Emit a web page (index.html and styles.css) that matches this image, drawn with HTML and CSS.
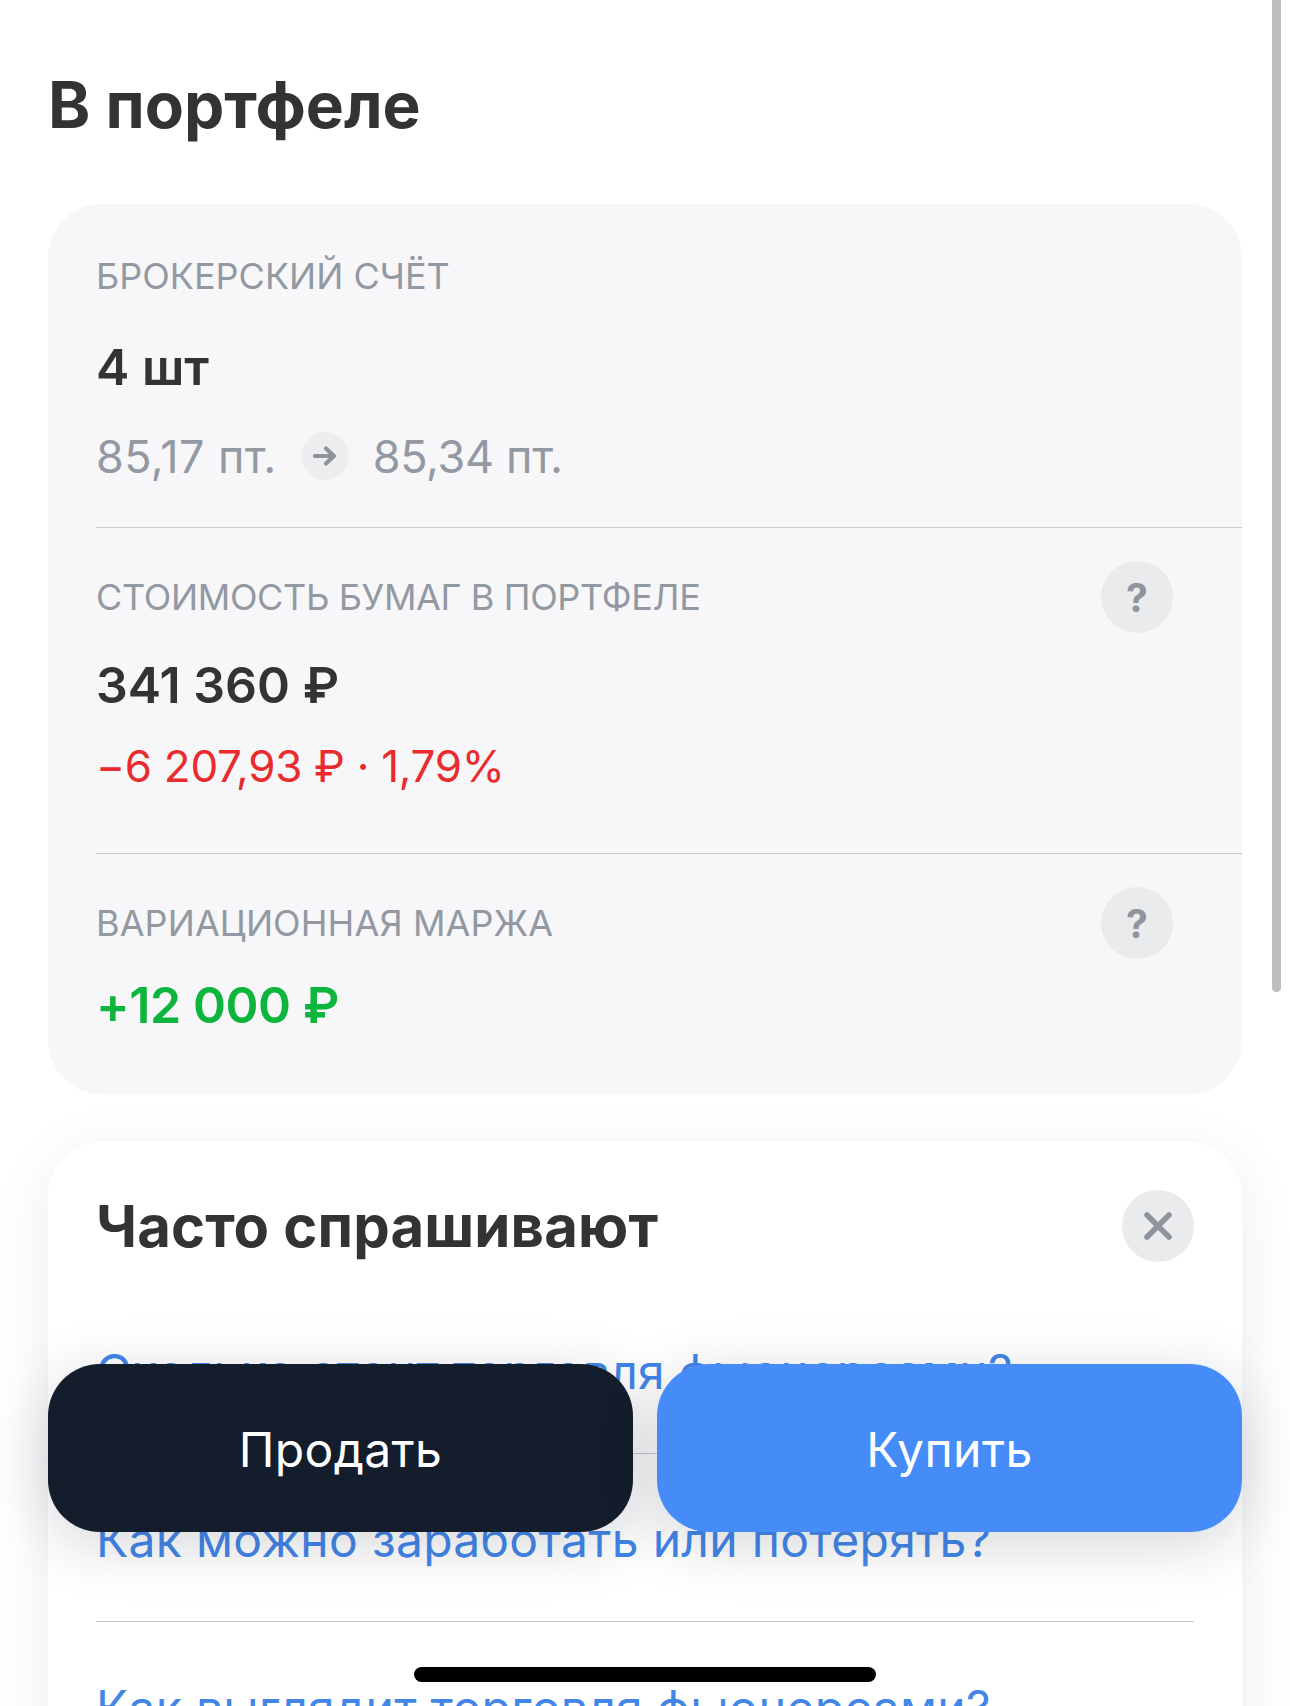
FILE: index.html
```html
<!DOCTYPE html>
<html lang="ru">
<head>
<meta charset="utf-8">
<title>В портфеле</title>
<link rel="stylesheet" href="styles.css">
</head>
<body>
<main class="page">
  <h1 class="title">В портфеле</h1>
  <section class="card">
    <div class="block block-first">
      <div class="label">БРОКЕРСКИЙ СЧЁТ</div>
      <div class="qty">4 шт</div>
      <div class="prices">
        <span class="price-from">85,17 пт.</span>
        <span class="arrow"><svg width="24" height="24" viewBox="0 0 24 24"><path d="M2 12H21M13 4.500L21 12L13 19.500" fill="none" stroke="#8f949c" stroke-width="4.200" stroke-linecap="round" stroke-linejoin="round"/></svg></span>
        <span class="price-to">85,34 пт.</span>
      </div>
    </div>
    <div class="block block-mid">
      <div class="label-row"><div class="label">СТОИМОСТЬ БУМАГ В ПОРТФЕЛЕ</div><span class="round">?</span></div>
      <div class="value">341 360 ₽</div>
      <div class="delta">−6 207,93 ₽ · 1,79%</div>
    </div>
    <div class="block block-last">
      <div class="label-row"><div class="label">ВАРИАЦИОННАЯ МАРЖА</div><span class="round">?</span></div>
      <div class="value green">+12 000 ₽</div>
    </div>
  </section>
  <section class="faq">
    <div class="faq-head">
      <h2 class="faq-title">Часто спрашивают</h2>
      <span class="round close"><svg width="28" height="28" viewBox="0 0 28 28"><path d="M3 3L25 25M25 3L3 25" fill="none" stroke="#8f949c" stroke-width="5.500" stroke-linecap="round"/></svg></span>
    </div>
    <a class="q">Сколько стоит торговля фьючерсами?</a>
    <a class="q">Как можно заработать или потерять?</a>
    <a class="q">Как выглядит торговля фьючерсами?</a>
  </section>
</main>
<div class="actions">
  <button class="btn btn-dark">Продать</button>
  <button class="btn btn-blue">Купить</button>
</div>
<div class="scrollbar"></div>
<div class="home"></div>
</body>
</html>
```
FILE: styles.css
```css
* { box-sizing: border-box; }
html, body { margin: 0; height: 1706px; overflow: hidden; background: #fff; }
body { position: relative; font-family: "Inter", "Liberation Sans", sans-serif; color: #333; }
.page { padding: 63px 48px 0; }
.title { margin: 0 0 57px; font-size: 64px; line-height: 84px; font-weight: 700; color: #333; }
.card { background: #f7f7f9; border-radius: 54px; height: 890px; padding-left: 48px; }
.block { border-bottom: 1px solid #c8cacd; }
.block-first { height: 324px; padding-top: 48px; }
.block-mid { height: 326px; padding-top: 33px; }
.block-last { border-bottom: 0; padding-top: 33px; }
.label { font-size: 36px; line-height: 48px; color: #9299a2; }
.block-first .label { margin-bottom: 37px; }
.block-mid .label { letter-spacing: -.35px; }
.block-last .label { letter-spacing: .1px; }
.label-row { display: flex; justify-content: space-between; align-items: center; padding-right: 69px; height: 72px; }
.qty { font-size: 50px; line-height: 60px; font-weight: 600; color: #333; }
.prices { display: flex; align-items: center; gap: 24px; margin-top: 35px; height: 48px; font-size: 45px; color: #9299a2; }
.price-from { letter-spacing: .4px; }
.price-to { letter-spacing: -.3px; }
.arrow { width: 48px; height: 48px; border-radius: 50%; background: #eceef0; display: flex; align-items: center; justify-content: center; }
.round { width: 72px; height: 72px; border-radius: 50%; background: #eaebed; color: #90949c; font-size: 39px; font-weight: 700; display: flex; align-items: center; justify-content: center; }
.value { font-size: 50px; line-height: 60px; font-weight: 600; color: #333; margin-top: 22px; }
.block-last .value { margin-top: 16px; letter-spacing: -.4px; }
.green { color: #0eb53c; }
.delta { font-size: 44px; line-height: 60px; letter-spacing: -.3px; color: #e92b2d; margin-top: 21px; }
.faq { margin-top: 48px; height: 640px; background: #fff; border-radius: 54px; padding: 48px 48px 0; box-shadow: 0 12px 60px rgba(20,30,50,.08); }
.faq-head { display: flex; justify-content: space-between; align-items: center; height: 72px; margin-bottom: 24px; }
.faq-title { margin: 0; font-size: 58px; line-height: 72px; font-weight: 700; letter-spacing: .15px; color: #333; }
.q { display: flex; align-items: center; height: 168px; padding-top: 3px; border-bottom: 1px solid #c8cacd; font-size: 48px; letter-spacing: .3px; color: #4286e8; }
.actions { position: absolute; left: 48px; right: 48px; top: 1364px; display: flex; gap: 24px; }
.btn { flex: 1; height: 168px; padding-top: 3px; border: 0; border-radius: 52px; font: 400 48px "Inter", "Liberation Sans", sans-serif; letter-spacing: .4px; color: #fff; box-shadow: 0 12px 60px rgba(20,30,50,.18); }
.btn-dark { background: #141d2b; }
.btn-blue { background: #458cf9; }
.scrollbar { position: absolute; left: 1272px; top: 0; width: 9px; height: 992px; background: #bebebe; border-radius: 0 0 5px 5px; }
.home { position: absolute; left: 414px; top: 1667px; width: 462px; height: 15px; background: #000; border-radius: 8px; }
```
